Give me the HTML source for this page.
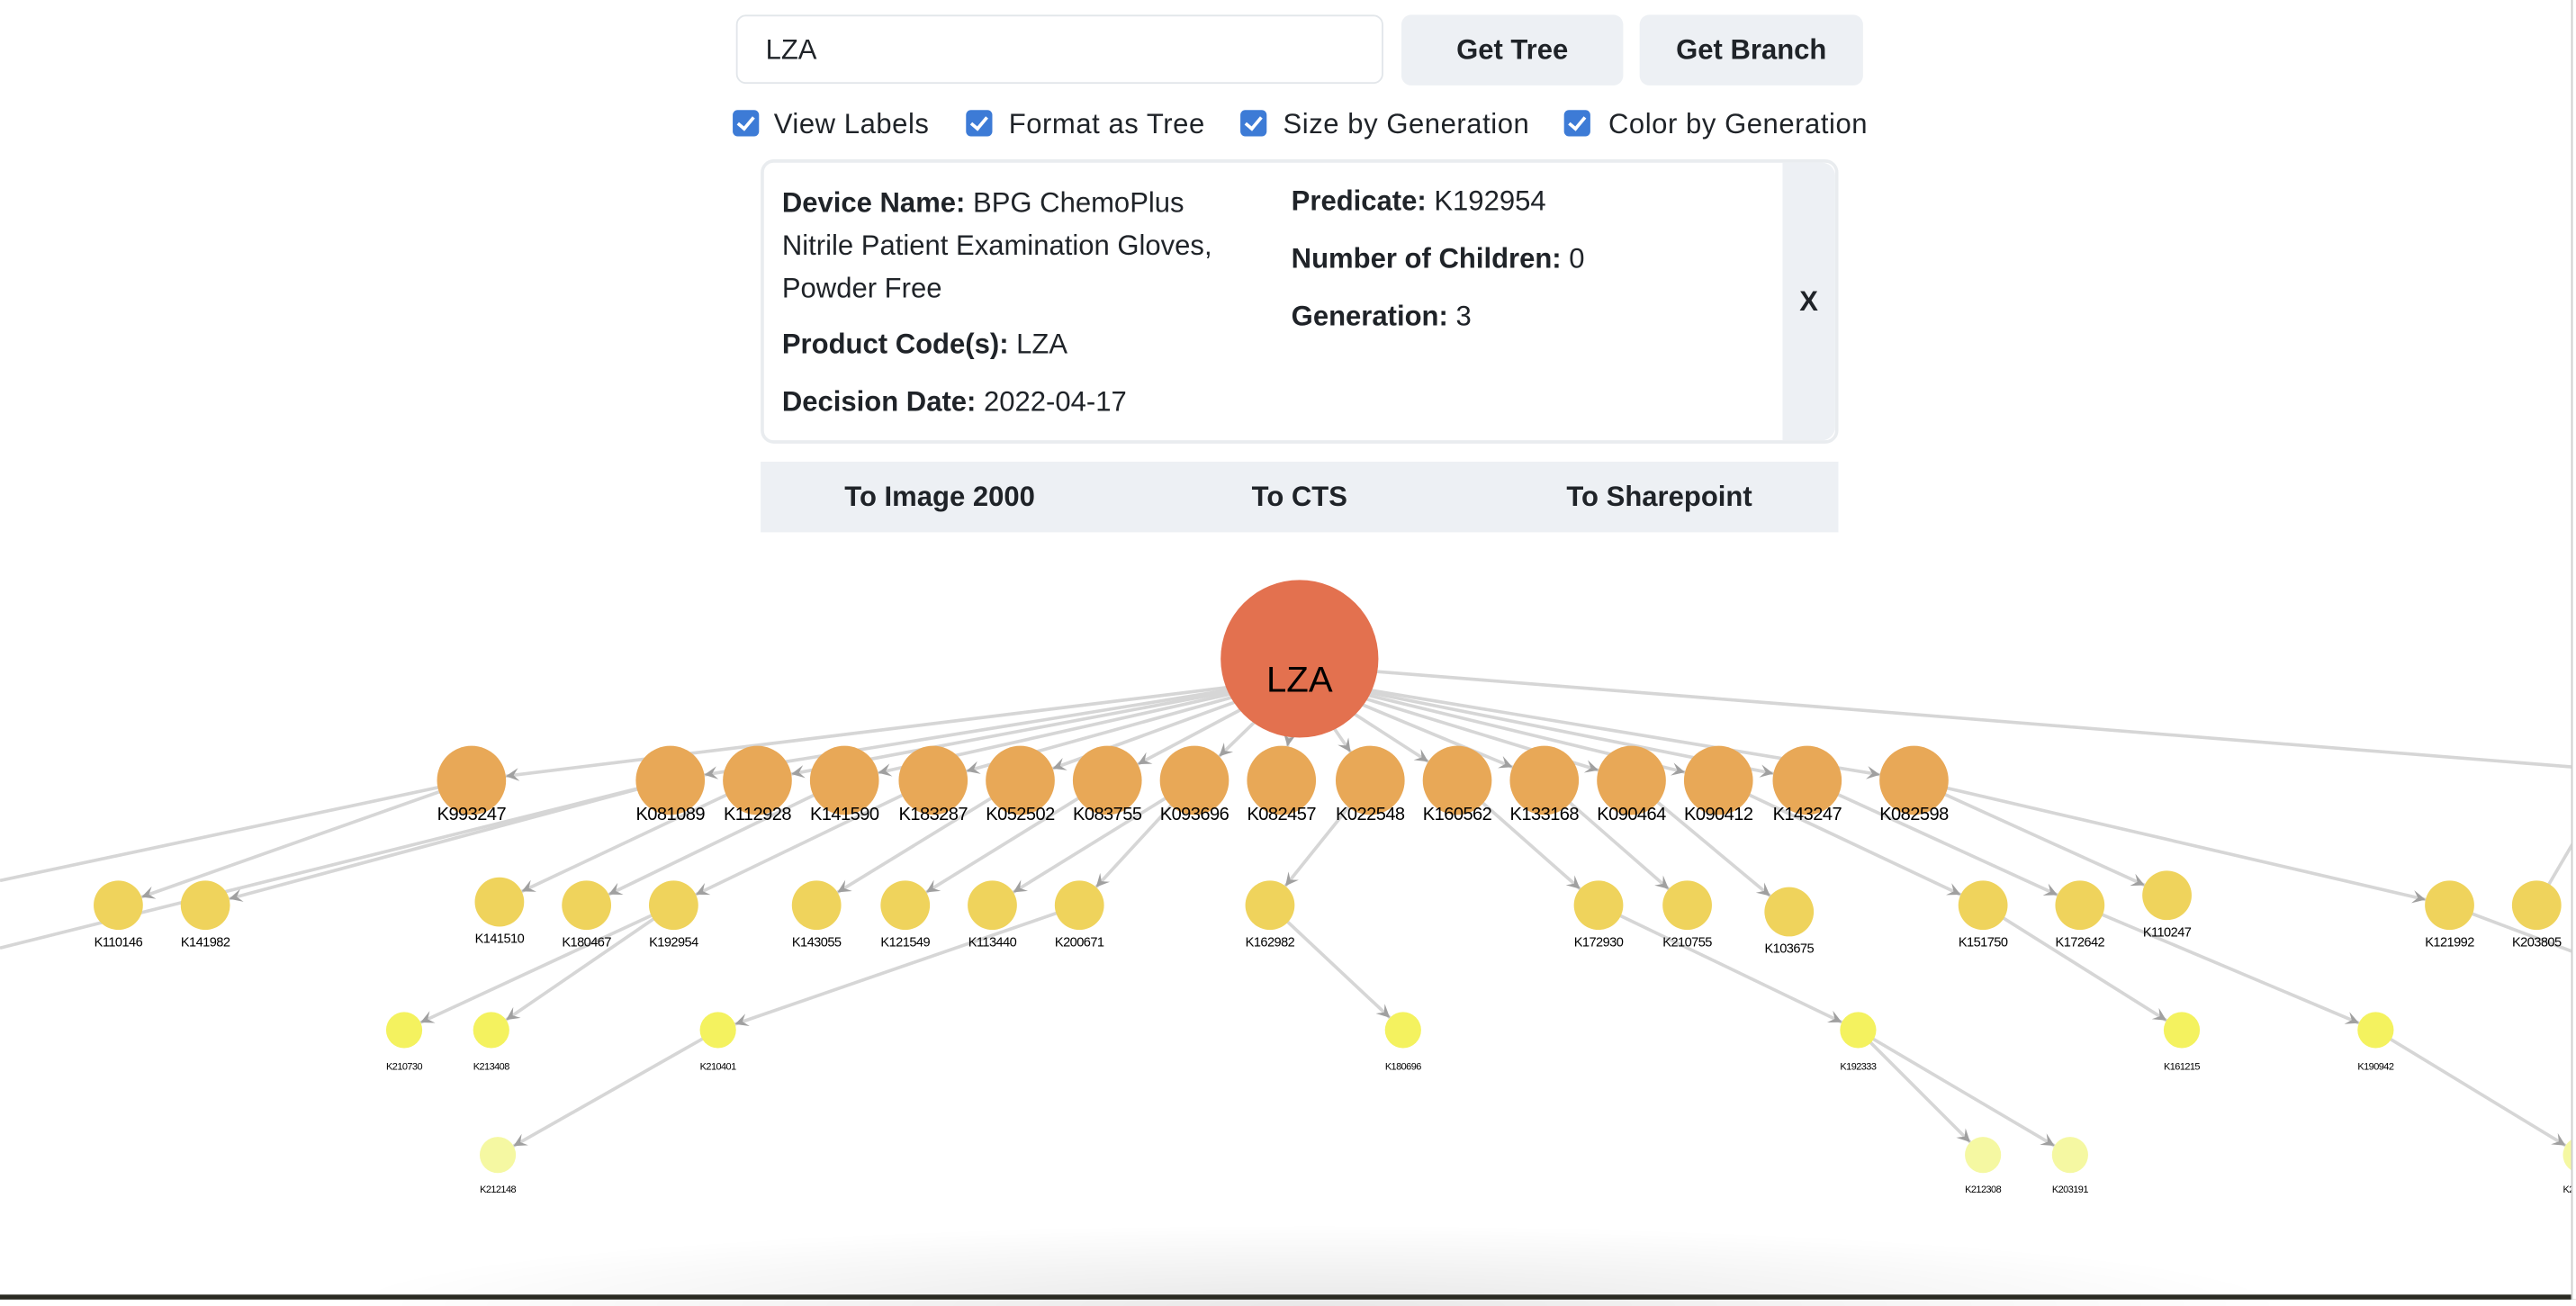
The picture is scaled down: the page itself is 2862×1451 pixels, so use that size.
<!DOCTYPE html>
<html><head><meta charset="utf-8">
<style>
html,body{margin:0;padding:0;width:2862px;height:1444px;overflow:hidden;background:#fff;font-family:"Liberation Sans",Arial,sans-serif;}
#s{position:absolute;left:0;top:0;width:1568px;height:791px;transform:scale(1.8253);transform-origin:0 0;color:#1f2328;}
.a{position:absolute;}
.btn{background:#edf0f4;border-radius:6px;font-weight:bold;font-size:17px;display:flex;align-items:center;justify-content:center;}
.cb{position:absolute;width:16px;height:16px;background:#3d7bd6;border-radius:3px;top:67px;}
.cb:after{content:"";position:absolute;left:5px;top:2px;width:4px;height:8px;border:solid #fff;border-width:0 2px 2px 0;transform:rotate(40deg);}
.lb{position:absolute;top:66px;font-size:17px;letter-spacing:0.3px;}
.t{position:absolute;font-size:17px;white-space:nowrap;}
b{font-weight:bold;}
</style></head><body>
<div id="s">
<div class="a" style="left:448px;top:9px;width:392px;height:40px;border:1.5px solid #e2e6ea;border-radius:6px;"></div>
<div class="t" style="left:466px;top:21px;">LZA</div>
<div class="a btn" style="left:853px;top:9px;width:135px;height:43px;">Get Tree</div>
<div class="a btn" style="left:998px;top:9px;width:136px;height:43px;">Get Branch</div>
<div class="cb" style="left:446px"></div><div class="lb" style="left:471px">View Labels</div>
<div class="cb" style="left:588px"></div><div class="lb" style="left:614px">Format as Tree</div>
<div class="cb" style="left:755px"></div><div class="lb" style="left:781px">Size by Generation</div>
<div class="cb" style="left:952px"></div><div class="lb" style="left:979px">Color by Generation</div>
<div class="a" style="left:463px;top:97px;width:652px;height:169px;border:2px solid #e9ecef;border-radius:8px;"></div>
<div class="a btn" style="left:1085px;top:99px;width:32px;height:169px;border-radius:0 8px 8px 0;">X</div>
<div class="t" style="left:476px;top:111px;line-height:26px;"><b>Device Name:</b> BPG ChemoPlus<br>Nitrile Patient Examination Gloves,<br>Powder Free</div>
<div class="t" style="left:476px;top:200px;"><b>Product Code(s):</b> LZA</div>
<div class="t" style="left:476px;top:235px;"><b>Decision Date:</b> 2022-04-17</div>
<div class="t" style="left:786px;top:113px;"><b>Predicate:</b> K192954</div>
<div class="t" style="left:786px;top:148px;"><b>Number of Children:</b> 0</div>
<div class="t" style="left:786px;top:183px;"><b>Generation:</b> 3</div>
<div class="a" style="left:463px;top:281px;width:656px;height:43px;background:#edf0f4;"></div>
<div class="t" style="left:572px;top:293px;transform:translateX(-50%);font-weight:bold;">To Image 2000</div>
<div class="t" style="left:791px;top:293px;transform:translateX(-50%);font-weight:bold;">To CTS</div>
<div class="t" style="left:1010px;top:293px;transform:translateX(-50%);font-weight:bold;">To Sharepoint</div>
<svg id="g" class="a" style="left:0;top:0" width="1568" height="791"></svg>
<div class="a" style="left:200px;top:745px;width:1200px;height:50px;background:radial-gradient(ellipse at 50% 100%,rgba(0,0,0,0.09),rgba(0,0,0,0) 70%);"></div>
<div class="a" style="left:0;top:788px;width:1568px;height:3px;background:#2a2a22;"></div>
<div class="a" style="left:1565px;top:0;width:3px;height:791px;background:#fff;border-left:1px solid #ccc;"></div>
</div>
<script>
var N={
LZA:[791,401,48,'#e3714f',22,0],
K993247:[287,475,21,'#e8a857',11,1],K081089:[408,475,21,'#e8a857',11,1],K112928:[461,475,21,'#e8a857',11,1],K141590:[514,475,21,'#e8a857',11,1],K183287:[568,475,21,'#e8a857',11,1],K052502:[621,475,21,'#e8a857',11,1],K083755:[674,475,21,'#e8a857',11,1],K093696:[727,475,21,'#e8a857',11,1],K082457:[780,475,21,'#e8a857',11,1],K022548:[834,475,21,'#e8a857',11,1],K160562:[887,475,21,'#e8a857',11,1],K133168:[940,475,21,'#e8a857',11,1],K090464:[993,475,21,'#e8a857',11,1],K090412:[1046,475,21,'#e8a857',11,1],K143247:[1100,475,21,'#e8a857',11,1],K082598:[1165,475,21,'#e8a857',11,1],
K110146:[72,551,15,'#efd35c',8,2],K141982:[125,551,15,'#efd35c',8,2],K141510:[304,549,15,'#efd35c',8,2],K180467:[357,551,15,'#efd35c',8,2],K192954:[410,551,15,'#efd35c',8,2],K143055:[497,551,15,'#efd35c',8,2],K121549:[551,551,15,'#efd35c',8,2],K113440:[604,551,15,'#efd35c',8,2],K200671:[657,551,15,'#efd35c',8,2],K162982:[773,551,15,'#efd35c',8,2],K172930:[973,551,15,'#efd35c',8,2],K210755:[1027,551,15,'#efd35c',8,2],K103675:[1089,555,15,'#efd35c',8,2],K151750:[1207,551,15,'#efd35c',8,2],K172642:[1266,551,15,'#efd35c',8,2],K110247:[1319,545,15,'#efd35c',8,2],K121992:[1491,551,15,'#efd35c',8,2],K203805:[1544,551,15,'#efd35c',8,2],
K210730:[246,627,11,'#f4f25f',6,3],K213408:[299,627,11,'#f4f25f',6,3],K210401:[437,627,11,'#f4f25f',6,3],K180696:[854,627,11,'#f4f25f',6,3],K192333:[1131,627,11,'#f4f25f',6,3],K161215:[1328,627,11,'#f4f25f',6,3],K190942:[1446,627,11,'#f4f25f',6,3],
K212148:[303,703,11,'#f5f8a2',6,4],K212308:[1207,703,11,'#f5f8a2',6,4],K203191:[1260,703,11,'#f5f8a2',6,4],K212890:[1571,703,11,'#f5f8a2',6,4]
};
var OFF=[0,3,10,13,12];
var E=[['K993247','K110146'],['K081089','K141982'],['K112928','K141510'],['K141590','K180467'],['K183287','K192954'],['K052502','K143055'],['K083755','K121549'],['K093696','K113440'],['K093696','K200671'],['K192954','K210730'],['K192954','K213408'],['K200671','K210401'],['K210401','K212148'],['K022548','K162982'],['K162982','K180696'],['K160562','K172930'],['K172930','K192333'],['K133168','K210755'],['K090464','K103675'],['K090412','K151750'],['K143247','K172642'],['K082598','K110247'],['K082598','K121992'],['K151750','K161215'],['K172642','K190942'],['K192333','K212308'],['K192333','K203191'],['K190942','K212890']];
for(var k in N){if(N[k][5]==1)E.unshift(['LZA',k]);}
var s='';
function line(x1,y1,x2,y2){s+='<line x1="'+x1+'" y1="'+y1+'" x2="'+x2+'" y2="'+y2+'" stroke="#d6d6d6" stroke-width="2"/>';}
line(791,405,1568,467);line(287,475,0,536);line(408,475,0,577);line(1491,551,1568,580);line(1568,510,1544,551);
E.forEach(function(e){var a=N[e[0]],b=N[e[1]];var ay=a[1]+(e[0]=='LZA'?12:0);var dx=b[0]-a[0],dy=b[1]-ay,d=Math.sqrt(dx*dx+dy*dy),ux=dx/d,uy=dy/d;
var tx=b[0]-ux*b[2],ty=b[1]-uy*b[2];line(a[0],ay,tx,ty);
var L=8,W=4,bx=tx-ux*L,by=ty-uy*L;
s+='<polygon points="'+tx+','+ty+' '+(bx-uy*W)+','+(by+ux*W)+' '+(tx-ux*L*0.6)+','+(ty-uy*L*0.6)+' '+(bx+uy*W)+','+(by-ux*W)+'" fill="#a0a0a0"/>';});
for(var k in N){var n=N[k];s+='<circle cx="'+n[0]+'" cy="'+n[1]+'" r="'+n[2]+'" fill="'+n[3]+'"/>';
if(k=='LZA')s+='<text x="791" y="421" text-anchor="middle" font-size="22" font-family="Liberation Sans">LZA</text>';
else s+='<text x="'+n[0]+'" y="'+(n[1]+n[2]+OFF[n[5]])+'" text-anchor="middle" font-size="'+n[4]+'" letter-spacing="-0.3" font-family="Liberation Sans">'+k+'</text>';}
document.getElementById('g').innerHTML=s;
</script>
</body></html>
